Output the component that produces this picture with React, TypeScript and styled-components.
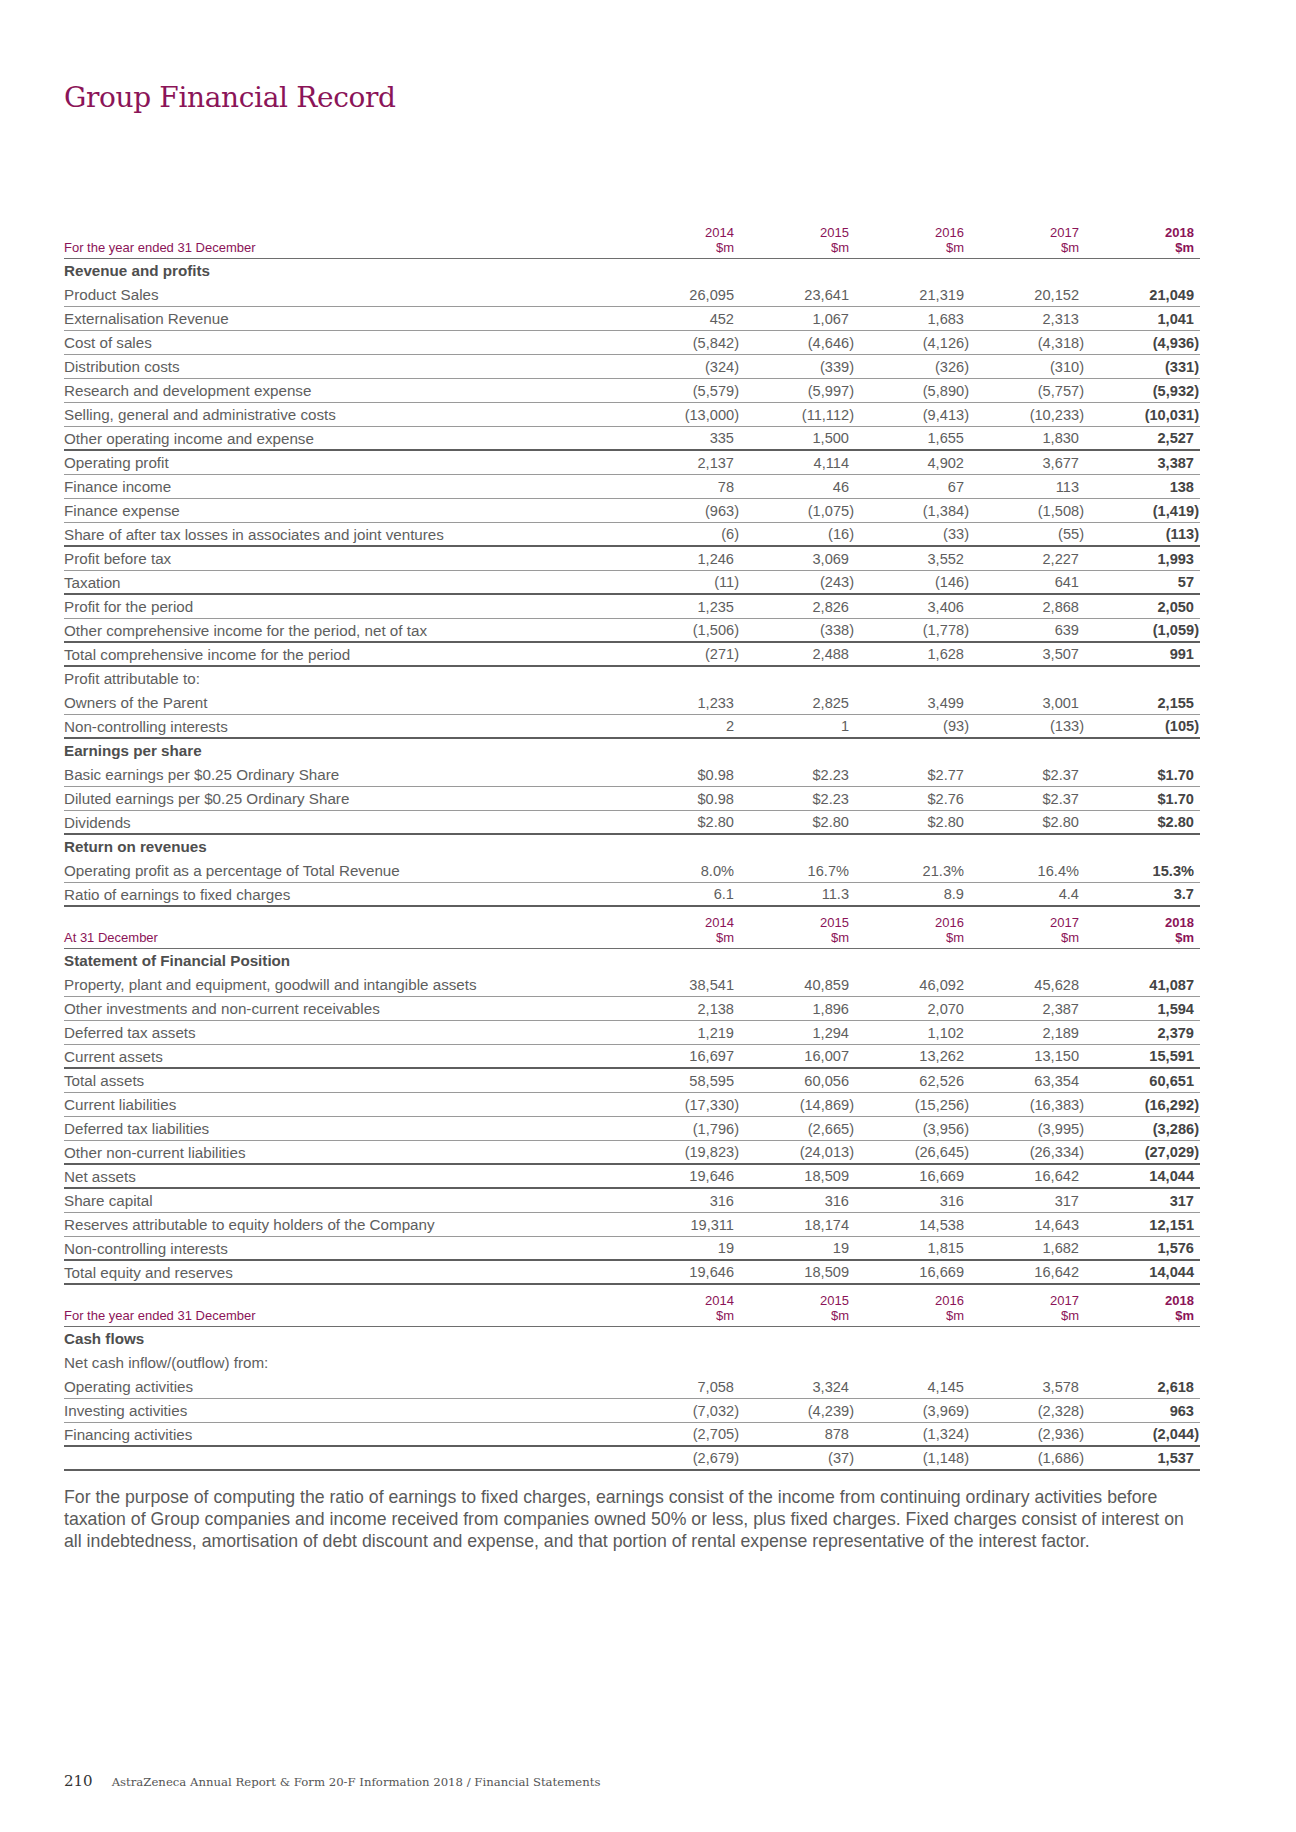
import React from "react";
import styled, { createGlobalStyle } from "styled-components";

const GlobalStyle = createGlobalStyle`
  html, body { margin: 0; padding: 0; background: #ffffff; }
  body { font-family: "Liberation Sans", Arial, sans-serif; }
`;

const MAGENTA = "#8b1458";

type Line = "thin" | "thick" | "none";
type Row = {
  label: string;
  values?: string[];
  kind?: "section" | "sub" | "row";
  line?: Line;
};

const Page = styled.div`
  width: 1296px;
  min-height: 1832px;
  box-sizing: border-box;
  padding: 78px 96px 0 64px;
  display: flex;
  flex-direction: column;
`;

const Title = styled.h1`
  margin: 0 0 99px 0;
  font-family: "DejaVu Serif", "Liberation Serif", serif;
  font-weight: 400;
  font-size: 28px;
  line-height: 40px;
  color: ${MAGENTA};
  letter-spacing: -0.35px;
`;

const Table = styled.div`
  display: grid;
  grid-template-columns: 1fr repeat(5, 115px);
  width: 1136px;
`;

const HeadLabel = styled.div`
  height: 42px;
  box-sizing: border-box;
  border-bottom: 1px solid #6e6e6e;
  display: flex;
  align-items: flex-end;
  padding-bottom: 3px;
  font-size: 13px;
  line-height: 15px;
  color: ${MAGENTA};
`;

const HeadYear = styled.div<{ $bold?: boolean }>`
  height: 42px;
  box-sizing: border-box;
  border-bottom: 1px solid #6e6e6e;
  display: flex;
  flex-direction: column;
  justify-content: flex-end;
  align-items: flex-end;
  padding-bottom: 3px;
  padding-right: 6px;
  font-size: 13px;
  line-height: 15px;
  color: ${MAGENTA};
  font-weight: ${(p) => (p.$bold ? 700 : 400)};
`;

const lineStyle = (l: Line) =>
  l === "thick"
    ? "border-bottom: 2px solid #5e5e5e;"
    : l === "thin"
    ? "border-bottom: 1px solid #9a9a9a;"
    : "border-bottom: 1px solid transparent;";

const Label = styled.div<{ $line: Line; $bold?: boolean }>`
  height: 24px;
  box-sizing: border-box;
  ${(p) => lineStyle(p.$line)}
  display: flex;
  align-items: center;
  font-size: 15.2px;
  color: ${(p) => (p.$bold ? "#4e4e4e" : "#5e5e5e")};
  font-weight: ${(p) => (p.$bold ? 700 : 400)};
  white-space: nowrap;
`;

const Num = styled.div<{ $line: Line; $bold?: boolean; $paren?: boolean }>`
  height: 24px;
  box-sizing: border-box;
  ${(p) => lineStyle(p.$line)}
  display: flex;
  align-items: center;
  justify-content: flex-end;
  padding-right: ${(p) => (p.$paren ? "1px" : "6px")};
  font-size: 14.6px;
  color: ${(p) => (p.$bold ? "#444444" : "#5e5e5e")};
  font-weight: ${(p) => (p.$bold ? 700 : 400)};
  white-space: nowrap;
`;

const Note = styled.p`
  margin: 15px 0 0 0;
  width: 1135px;
  font-size: 17.7px;
  line-height: 22px;
  color: #5a5a5a;
`;

const Spacer = styled.div`
  flex: 1;
`;

const Footer = styled.div`
  display: flex;
  align-items: baseline;
  gap: 19px;
  margin-bottom: 42px;
  font-family: "DejaVu Serif", "Liberation Serif", serif;
`;

const PageNo = styled.span`
  font-size: 15px;
  color: #333333;
`;

const FooterText = styled.span`
  font-size: 11.7px;
  color: #555555;
`;

const years = ["2014", "2015", "2016", "2017", "2018"];

const section1: Row[] = [
  { label: "Revenue and profits", kind: "section" },
  { label: "Product Sales", values: ["26,095", "23,641", "21,319", "20,152", "21,049"] },
  { label: "Externalisation Revenue", values: ["452", "1,067", "1,683", "2,313", "1,041"] },
  { label: "Cost of sales", values: ["(5,842)", "(4,646)", "(4,126)", "(4,318)", "(4,936)"] },
  { label: "Distribution costs", values: ["(324)", "(339)", "(326)", "(310)", "(331)"] },
  { label: "Research and development expense", values: ["(5,579)", "(5,997)", "(5,890)", "(5,757)", "(5,932)"] },
  { label: "Selling, general and administrative costs", values: ["(13,000)", "(11,112)", "(9,413)", "(10,233)", "(10,031)"] },
  { label: "Other operating income and expense", values: ["335", "1,500", "1,655", "1,830", "2,527"], line: "thick" },
  { label: "Operating profit", values: ["2,137", "4,114", "4,902", "3,677", "3,387"] },
  { label: "Finance income", values: ["78", "46", "67", "113", "138"] },
  { label: "Finance expense", values: ["(963)", "(1,075)", "(1,384)", "(1,508)", "(1,419)"] },
  { label: "Share of after tax losses in associates and joint ventures", values: ["(6)", "(16)", "(33)", "(55)", "(113)"], line: "thick" },
  { label: "Profit before tax", values: ["1,246", "3,069", "3,552", "2,227", "1,993"] },
  { label: "Taxation", values: ["(11)", "(243)", "(146)", "641", "57"], line: "thick" },
  { label: "Profit for the period", values: ["1,235", "2,826", "3,406", "2,868", "2,050"] },
  { label: "Other comprehensive income for the period, net of tax", values: ["(1,506)", "(338)", "(1,778)", "639", "(1,059)"], line: "thick" },
  { label: "Total comprehensive income for the period", values: ["(271)", "2,488", "1,628", "3,507", "991"], line: "thick" },
  { label: "Profit attributable to:", kind: "sub" },
  { label: "Owners of the Parent", values: ["1,233", "2,825", "3,499", "3,001", "2,155"] },
  { label: "Non-controlling interests", values: ["2", "1", "(93)", "(133)", "(105)"], line: "thick" },
  { label: "Earnings per share", kind: "section" },
  { label: "Basic earnings per $0.25 Ordinary Share", values: ["$0.98", "$2.23", "$2.77", "$2.37", "$1.70"] },
  { label: "Diluted earnings per $0.25 Ordinary Share", values: ["$0.98", "$2.23", "$2.76", "$2.37", "$1.70"] },
  { label: "Dividends", values: ["$2.80", "$2.80", "$2.80", "$2.80", "$2.80"], line: "thick" },
  { label: "Return on revenues", kind: "section" },
  { label: "Operating profit as a percentage of Total Revenue", values: ["8.0%", "16.7%", "21.3%", "16.4%", "15.3%"] },
  { label: "Ratio of earnings to fixed charges", values: ["6.1", "11.3", "8.9", "4.4", "3.7"], line: "thick" },
];

const section2: Row[] = [
  { label: "Statement of Financial Position", kind: "section" },
  { label: "Property, plant and equipment, goodwill and intangible assets", values: ["38,541", "40,859", "46,092", "45,628", "41,087"] },
  { label: "Other investments and non-current receivables", values: ["2,138", "1,896", "2,070", "2,387", "1,594"] },
  { label: "Deferred tax assets", values: ["1,219", "1,294", "1,102", "2,189", "2,379"] },
  { label: "Current assets", values: ["16,697", "16,007", "13,262", "13,150", "15,591"], line: "thick" },
  { label: "Total assets", values: ["58,595", "60,056", "62,526", "63,354", "60,651"] },
  { label: "Current liabilities", values: ["(17,330)", "(14,869)", "(15,256)", "(16,383)", "(16,292)"] },
  { label: "Deferred tax liabilities", values: ["(1,796)", "(2,665)", "(3,956)", "(3,995)", "(3,286)"] },
  { label: "Other non-current liabilities", values: ["(19,823)", "(24,013)", "(26,645)", "(26,334)", "(27,029)"], line: "thick" },
  { label: "Net assets", values: ["19,646", "18,509", "16,669", "16,642", "14,044"], line: "thick" },
  { label: "Share capital", values: ["316", "316", "316", "317", "317"] },
  { label: "Reserves attributable to equity holders of the Company", values: ["19,311", "18,174", "14,538", "14,643", "12,151"] },
  { label: "Non-controlling interests", values: ["19", "19", "1,815", "1,682", "1,576"], line: "thick" },
  { label: "Total equity and reserves", values: ["19,646", "18,509", "16,669", "16,642", "14,044"], line: "thick" },
];

const section3: Row[] = [
  { label: "Cash flows", kind: "section" },
  { label: "Net cash inflow/(outflow) from:", kind: "sub" },
  { label: "Operating activities", values: ["7,058", "3,324", "4,145", "3,578", "2,618"] },
  { label: "Investing activities", values: ["(7,032)", "(4,239)", "(3,969)", "(2,328)", "963"] },
  { label: "Financing activities", values: ["(2,705)", "878", "(1,324)", "(2,936)", "(2,044)"], line: "thick" },
  { label: "", values: ["(2,679)", "(37)", "(1,148)", "(1,686)", "1,537"], line: "thick" },
];

function Block({ heading, rows }: { heading: string; rows: Row[] }) {
  return (
    <Table>
      <HeadLabel>{heading}</HeadLabel>
      {years.map((y, i) => (
        <HeadYear key={y} $bold={i === 4}>
          <span>{y}</span>
          <span>$m</span>
        </HeadYear>
      ))}
      {rows.map((r, ri) => {
        const kind = r.kind ?? "row";
        const line: Line = kind === "row" ? r.line ?? "thin" : "none";
        const vals = r.values ?? ["", "", "", "", ""];
        return (
          <React.Fragment key={ri}>
            <Label $line={line} $bold={kind === "section"}>
              {r.label}
            </Label>
            {vals.map((v, vi) => (
              <Num key={vi} $line={line} $bold={vi === 4} $paren={v.endsWith(")")}>
                {v}
              </Num>
            ))}
          </React.Fragment>
        );
      })}
    </Table>
  );
}

export default function App() {
  return (
    <>
      <GlobalStyle />
      <Page>
        <Title>Group Financial Record</Title>
        <Block heading="For the year ended 31 December" rows={section1} />
        <Block heading="At 31 December" rows={section2} />
        <Block heading="For the year ended 31 December" rows={section3} />
        <Note>
          For the purpose of computing the ratio of earnings to fixed charges, earnings consist of the income from
          continuing ordinary activities before taxation of Group companies and income received from companies owned
          50% or less, plus fixed charges. Fixed charges consist of interest on all indebtedness, amortisation of debt
          discount and expense, and that portion of rental expense representative of the interest factor.
        </Note>
        <Spacer />
        <Footer>
          <PageNo>210</PageNo>
          <FooterText>AstraZeneca Annual Report &amp; Form 20-F Information 2018 / Financial Statements</FooterText>
        </Footer>
      </Page>
    </>
  );
}
